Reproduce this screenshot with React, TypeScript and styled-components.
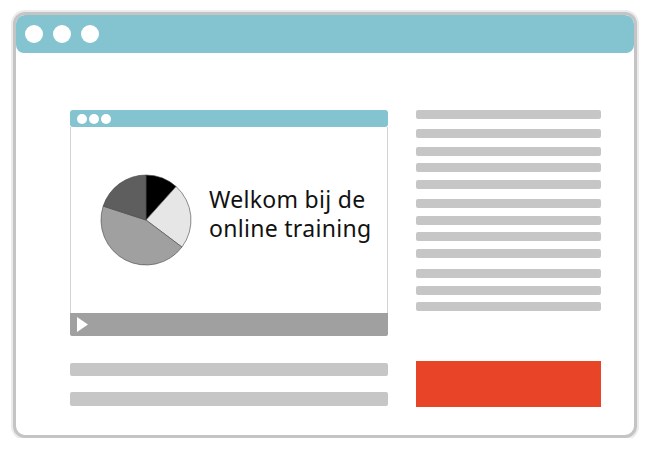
import styled, { createGlobalStyle } from 'styled-components';

const GlobalStyle = createGlobalStyle`
  body {
    margin: 0;
    background: #ffffff;
    font-family: "Noto Sans", "Liberation Sans", sans-serif;
  }
`;

const Window = styled.div`
  box-sizing: border-box;
  margin: 12px 0 0 13px;
  width: 624px;
  height: 426px;
  border: 3px solid #c4c4c4;
  border-radius: 12px;
  box-shadow: 0 0 0 2px #ebebeb;
  background: #ffffff;
  overflow: hidden;
`;

const TitleBar = styled.div<{ $height: number; $dot: number; $gap: number; $pad: number; $radius: number }>`
  display: flex;
  align-items: center;
  gap: ${(p) => p.$gap}px;
  height: ${(p) => p.$height}px;
  padding-left: ${(p) => p.$pad}px;
  background: #84c4d0;
  border-radius: ${(p) => p.$radius}px;

  span {
    width: ${(p) => p.$dot}px;
    height: ${(p) => p.$dot}px;
    border-radius: 50%;
    background: #ffffff;
  }
`;

const Content = styled.div`
  display: grid;
  grid-template-columns: 318px 185px;
  column-gap: 28px;
  row-gap: 25px;
  padding: 57px 0 0 54px;
`;

const Video = styled.div`
  display: flex;
  flex-direction: column;
  height: 226px;
`;

const Screen = styled.div`
  flex: 1;
  display: flex;
  align-items: center;
  gap: 17px;
  padding-left: 29px;
  border-left: 1px solid #d4d4d4;
  border-right: 1px solid #d4d4d4;
`;

const Caption = styled.div`
  font-size: 23px;
  line-height: 29px;
  letter-spacing: 0.3px;
  color: #111111;
  margin-bottom: 12px;
`;

const Controls = styled.div`
  display: flex;
  align-items: center;
  height: 23px;
  padding-left: 7px;
  background: #a0a0a0;
  border-radius: 0 0 2px 2px;
`;

const Lines = styled.div`
  display: flex;
  flex-direction: column;
`;

const Line = styled.div<{ $top: number; $height: number }>`
  margin-top: ${(p) => p.$top}px;
  height: ${(p) => p.$height}px;
  background: #c6c6c6;
  border-radius: 2px;
`;

const CallToAction = styled.div`
  height: 46px;
  background: #e84427;
`;

const slices = [
  { from: 0, to: 42, color: '#000000' },
  { from: 42, to: 127, color: '#e6e6e6' },
  { from: 127, to: 288, color: '#a0a0a0' },
  { from: 288, to: 360, color: '#5e5e5e' },
];

const point = (deg: number, r: number) => {
  const a = (deg * Math.PI) / 180;
  return `${(Math.sin(a) * r).toFixed(2)} ${(-Math.cos(a) * r).toFixed(2)}`;
};

function Pie() {
  const r = 45;
  return (
    <svg width="92" height="92" viewBox="-46 -46 92 92">
      {slices.map((s) => (
        <path
          key={s.from}
          d={`M0 0 L${point(s.from, r)} A${r} ${r} 0 ${s.to - s.from > 180 ? 1 : 0} 1 ${point(s.to, r)} Z`}
          fill={s.color}
          stroke="#444"
          strokeWidth="0.6"
          strokeLinejoin="round"
        />
      ))}
    </svg>
  );
}

const sideTops = [0, 10, 9, 7, 8, 10, 8, 7, 8, 11, 8, 7];

export default function App() {
  return (
    <>
      <GlobalStyle />
      <Window>
        <TitleBar $height={38} $dot={18} $gap={10} $pad={9} $radius={8}>
          <span />
          <span />
          <span />
        </TitleBar>
        <Content>
          <Video>
            <TitleBar $height={17} $dot={10} $gap={2} $pad={7} $radius={3}>
              <span />
              <span />
              <span />
            </TitleBar>
            <Screen>
              <Pie />
              <Caption>
                Welkom bij de
                <br />
                online training
              </Caption>
            </Screen>
            <Controls>
              <svg width="11" height="15" viewBox="0 0 11 15">
                <polygon points="0,0 11,7.5 0,15" fill="#ffffff" />
              </svg>
            </Controls>
          </Video>
          <Lines>
            {sideTops.map((t, i) => (
              <Line key={i} $top={t} $height={9} />
            ))}
          </Lines>
          <Lines>
            <Line $top={2} $height={13} />
            <Line $top={16} $height={14} />
          </Lines>
          <CallToAction />
        </Content>
      </Window>
    </>
  );
}
